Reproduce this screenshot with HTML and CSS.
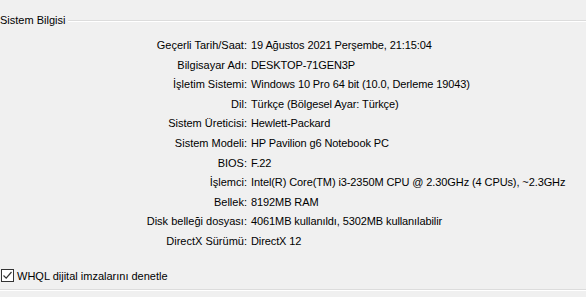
FILE: index.html
```html
<!DOCTYPE html>
<html lang="tr">
<head>
    <meta charset="UTF-8">
    <meta name="viewport" content="width=device-width, initial-scale=1.0">
    <title>Sistem Bilgisi</title>
    <link rel="stylesheet" href="styles.css">
</head>
<body>
    <div class="group">
        <div class="group-title">
            <span>Sistem Bilgisi</span>
            <div class="rule"></div>
        </div>
        <div class="info">
            <div class="label">Geçerli Tarih/Saat:</div><div class="value">19 Ağustos 2021 Perşembe, 21:15:04</div>
            <div class="label">Bilgisayar Adı:</div><div class="value">DESKTOP-71GEN3P</div>
            <div class="label">İşletim Sistemi:</div><div class="value">Windows 10 Pro 64 bit (10.0, Derleme 19043)</div>
            <div class="label">Dil:</div><div class="value">Türkçe (Bölgesel Ayar: Türkçe)</div>
            <div class="label">Sistem Üreticisi:</div><div class="value">Hewlett-Packard</div>
            <div class="label">Sistem Modeli:</div><div class="value">HP Pavilion g6 Notebook PC</div>
            <div class="label">BIOS:</div><div class="value">F.22</div>
            <div class="label">İşlemci:</div><div class="value">Intel(R) Core(TM) i3-2350M CPU @ 2.30GHz (4 CPUs), ~2.3GHz</div>
            <div class="label">Bellek:</div><div class="value">8192MB RAM</div>
            <div class="label">Disk belleği dosyası:</div><div class="value">4061MB kullanıldı, 5302MB kullanılabilir</div>
            <div class="label">DirectX Sürümü:</div><div class="value">DirectX 12</div>
        </div>
    </div>
    <label class="check">
        <span class="box">
            <svg width="11" height="11" viewBox="0 0 11 11"><path d="M1.5 5.5 L4.2 8.2 L9.5 2" fill="none" stroke="#333" stroke-width="1.2"/></svg>
        </span>
        <span>WHQL dijital imzalarını denetle</span>
    </label>
    <div class="bottom-rule"></div>
</body>
</html>
```
FILE: styles.css
```css
body{
    margin: 0;
    padding: 0;
    background: #f0f0f0;
    color: #000;
    font-family: "Liberation Sans", "DejaVu Sans", sans-serif;
    font-size: 11px;
    width: 586px;
    height: 297px;
    overflow: hidden;
}
.group{
    padding-top: 13px;
}
.group-title{
    display: flex;
    align-items: center;
    height: 14px;
    line-height: 14px;
}
.group-title .rule{
    flex: 1;
    margin-left: 3px;
    margin-top: 1px;
    border-top: 1px solid #dcdcdc;
    border-bottom: 1px solid #fff;
}
.info{
    display: grid;
    grid-template-columns: 247px 1fr;
    column-gap: 4px;
    margin-top: 9px;
    line-height: 19.6px;
}
.value{
    letter-spacing: -0.1px;
}
.label{
    text-align: right;
}
.check{
    display: flex;
    align-items: center;
    margin-top: 17px;
    height: 14px;
    padding-left: 1px;
}
.box{
    width: 11px;
    height: 11px;
    border: 1px solid #333;
    background: #fff;
    margin-right: 3px;
    display: flex;
}
.bottom-rule{
    margin-top: 6px;
    border-top: 1px solid #dcdcdc;
    border-bottom: 1px solid #fff;
}
```
